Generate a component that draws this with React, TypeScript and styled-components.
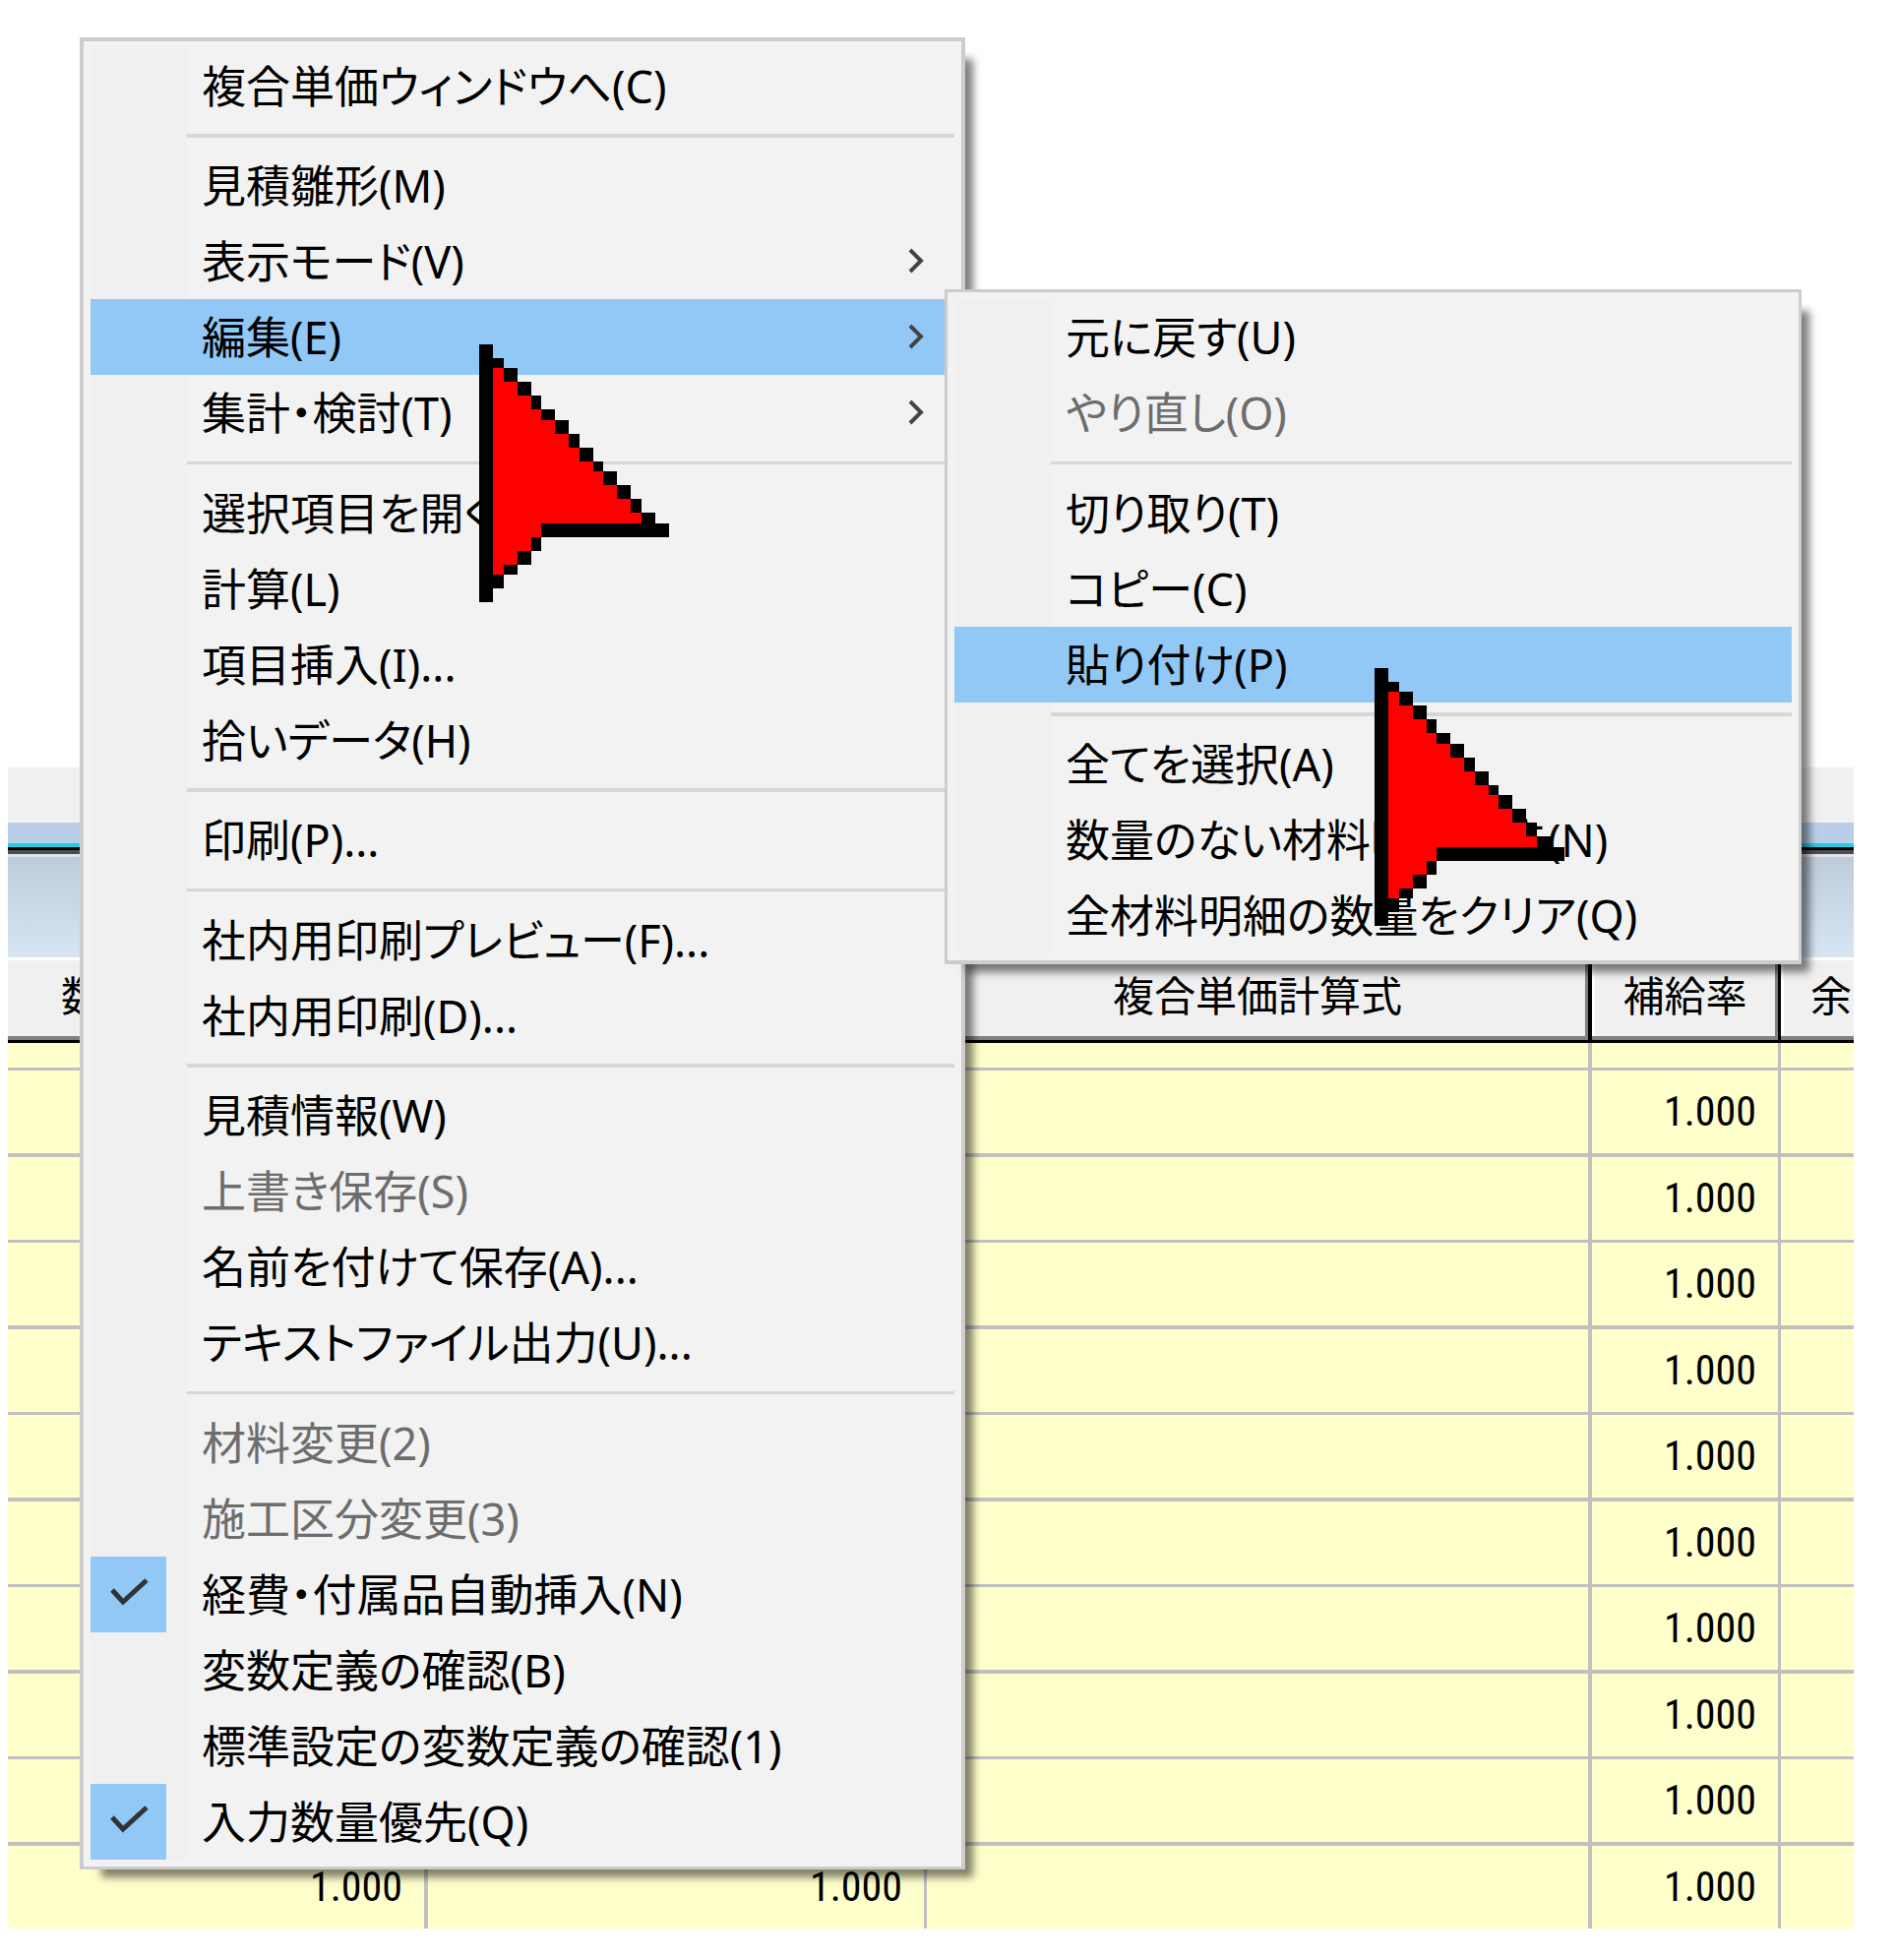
import React from "react";
import styled, { createGlobalStyle, css } from "styled-components";

const GlobalStyle = createGlobalStyle`
  *, *::before, *::after { box-sizing: border-box; }
  body { margin: 0; background: #fff; }
`;

const uiFont = `"Noto Sans", "Noto Sans CJK JP", sans-serif`;
const gridFont = `"Roboto Condensed", "Noto Sans CJK JP", sans-serif`;

const Page = styled.main`
  position: relative;
  padding: 780px 44px 32px 8px;
  overflow: hidden;
`;

/* ---------- sheet behind the menus ---------- */

const ToolStrip = styled.div`
  height: 56px;
  background: #f0f0f0;
`;

const TitleEdge = styled.div`
  height: 35px;
  background: #b9cfe9;
  border-bottom: 3px solid #dfe4f0;
  display: flex;
  flex-direction: column;
  justify-content: flex-end;
`;

const EdgeLine = styled.div<{ $color: string; $size: number }>`
  height: ${(p) => p.$size}px;
  background: ${(p) => p.$color};
`;

const Banner = styled.div`
  height: 105px;
  background: linear-gradient(#becbd8, #d8e5f3);
  border-bottom: 3px solid #fff;
`;

const Grid = styled.table`
  width: 100%;
  table-layout: fixed;
  border-collapse: separate;
  border-spacing: 0;
  background: #ffffcc;
  font-family: ${gridFont};
  color: #000;
`;

const Col = styled.col<{ $width?: number }>`
  ${(p) => p.$width && css`width: ${p.$width}px;`}
`;

const HeadCell = styled.th<{ $align?: string }>`
  height: 84px;
  padding: 0 0 5px;
  background: #f0f0f0;
  border-bottom: 3px solid #000;
  border-right: 4px solid #000;
  box-shadow: inset -3px -4px #808080, inset 3px 0 #fff;
  font-size: 42px;
  font-weight: 400;
  line-height: 1;
  text-align: ${(p) => p.$align ?? "center"};
  white-space: nowrap;
  overflow: hidden;

  &:nth-child(even) { border-right-width: 3px; }
  &:first-child { padding-left: 54px; box-shadow: inset -3px -4px #808080; }
  &:last-child {
    border-right: 0;
    padding-left: 30px;
    box-shadow: inset 0 -4px #808080, inset 3px 0 #fff;
  }
`;

const Row = styled.tr<{ $height: number }>`
  height: ${(p) => p.$height}px;
`;

const Cell = styled.td<{ $line: number }>`
  padding: 0 22px 0 0;
  border-right: 4px solid #c0c0c0;
  border-bottom: ${(p) => p.$line}px solid #c0c0c0;
  font-size: 42px;
  line-height: 1;
  text-align: right;

  &:nth-child(even) { border-right-width: 3px; }
  &:last-child { border-right: 0; }
`;

/* ---------- menus ---------- */

const MenuPanel = styled.div<{ $left: number; $top: number; $width: number; $border: string }>`
  position: absolute;
  left: ${(p) => p.$left}px;
  top: ${(p) => p.$top}px;
  width: ${(p) => p.$width}px;
  padding: 7px;
  display: flex;
  flex-direction: column;
  border: solid #ccc;
  border-width: ${(p) => p.$border};
  background-color: #f2f2f2;
  background-image: linear-gradient(#f0f0f0, #f0f0f0);
  background-origin: content-box;
  background-repeat: no-repeat;
  background-size: 98px 100%;
  box-shadow: 15px 15px 8px -7px rgba(0, 0, 0, 0.5);
`;

const itemLayout = css`
  display: grid;
  grid-template-columns: 98px 1fr auto;
  align-items: center;
  height: 77px;
  padding: 0 30px 0 0;
  font-family: ${uiFont};
  font-size: 45px;
  font-feature-settings: "palt";
  line-height: 76px;
  text-align: left;
  white-space: nowrap;
  color: #000;
`;

const ItemButton = styled.button<{ $active?: boolean }>`
  ${itemLayout}
  border: 0;
  background: ${(p) => (p.$active ? "#91c8f6" : "transparent")};

  &:disabled { color: #6d6d6d; }
`;

const ItemLabel = styled.label`
  ${itemLayout}
`;

const Caption = styled.span`
  grid-column: 2;
  padding-left: 15px;
`;

const Tick = styled.input`
  grid-area: 1 / 1;
  appearance: none;
  width: 77px;
  height: 77px;
  margin: 0;

  &:checked { background: #91c8f6; }
`;

const TickMark = styled.svg`
  grid-area: 1 / 1;
  width: 77px;
  height: 77px;
  pointer-events: none;
`;

const Chevron = styled.svg`
  width: 18px;
  height: 28px;
`;

const Divider = styled.hr<{ $thick: boolean }>`
  width: auto;
  align-self: stretch;
  height: ${(p) => (p.$thick ? 4 : 3)}px;
  margin: ${(p) => (p.$thick ? 10 : 11)}px 0 ${(p) => (p.$thick ? 10 : 11)}px 98px;
  border: 0;
  background: #d7d7d7;
`;

const Pointer = styled.svg<{ $left: number; $top: number }>`
  position: absolute;
  left: ${(p) => p.$left}px;
  top: ${(p) => p.$top}px;
  width: 193px;
  height: 262px;
  pointer-events: none;
`;

type Entry =
  | { kind: "item"; text: string; disabled?: boolean; active?: boolean; sub?: boolean }
  | { kind: "check"; text: string }
  | { kind: "line"; thick: boolean };

const item = (text: string, extra: object = {}): Entry => ({ kind: "item", text, ...extra });
const check = (text: string): Entry => ({ kind: "check", text });
const line = (thick: boolean): Entry => ({ kind: "line", thick });

const mainEntries: Entry[] = [
  item("複合単価ウィンドウへ(C)"),
  line(true),
  item("見積雛形(M)"),
  item("表示モード(V)", { sub: true }),
  item("編集(E)", { sub: true, active: true }),
  item("集計・検討(T)", { sub: true }),
  line(false),
  item("選択項目を開く"),
  item("計算(L)"),
  item("項目挿入(I)..."),
  item("拾いデータ(H)"),
  line(true),
  item("印刷(P)..."),
  line(false),
  item("社内用印刷プレビュー(F)..."),
  item("社内用印刷(D)..."),
  line(true),
  item("見積情報(W)"),
  item("上書き保存(S)", { disabled: true }),
  item("名前を付けて保存(A)..."),
  item("テキストファイル出力(U)..."),
  line(false),
  item("材料変更(2)", { disabled: true }),
  item("施工区分変更(3)", { disabled: true }),
  check("経費・付属品自動挿入(N)"),
  item("変数定義の確認(B)"),
  item("標準設定の変数定義の確認(1)"),
  check("入力数量優先(Q)"),
];

const editEntries: Entry[] = [
  item("元に戻す(U)"),
  item("やり直し(O)", { disabled: true }),
  line(false),
  item("切り取り(T)"),
  item("コピー(C)"),
  item("貼り付け(P)", { active: true }),
  line(true),
  item("全てを選択(A)"),
  item("数量のない材料明細消去(N)"),
  item("全材料明細の数量をクリア(Q)"),
];

function MenuEntry({ entry }: { entry: Entry }) {
  if (entry.kind === "line") return <Divider $thick={entry.thick} />;
  if (entry.kind === "check")
    return (
      <ItemLabel>
        <Tick type="checkbox" defaultChecked />
        <TickMark viewBox="0 0 77 77" aria-hidden="true">
          <path d="M22 34 L33 46 L57 24" fill="none" stroke="#333" strokeWidth="5" />
        </TickMark>
        <Caption>{entry.text}</Caption>
      </ItemLabel>
    );
  return (
    <ItemButton type="button" disabled={entry.disabled} $active={entry.active}>
      <Caption>{entry.text}</Caption>
      {entry.sub && (
        <Chevron viewBox="0 0 18 28" aria-hidden="true">
          <path d="M3 2 L14 13 L3 24" fill="none" stroke="#444" strokeWidth="4" />
        </Chevron>
      )}
    </ItemButton>
  );
}

function Arrow({ left, top }: { left: number; top: number }) {
  return (
    <Pointer $left={left} $top={top} viewBox="0 0 193 262" shapeRendering="crispEdges" aria-hidden="true">
      <path
        fill="#000"
        d="M0 0H14V14H25V24H39V38H53V52H63V66H77V77H91V91H102V105H116V119H126V129H140V143H154V157H165V171H179V182H193V196H63V210H53V224H39V234H25V248H14V262H0Z"
      />
      <path
        fill="#f00"
        d="M14 24H25V38H39V52H53V66H63V77H77V91H91V105H102V119H116V129H126V143H140V157H154V171H165V182H63V196H53V210H39V224H25V234H14Z"
      />
    </Pointer>
  );
}

const rows = Array.from({ length: 10 }, (_, i) => {
  const last = i === 9;
  return {
    quantity: last ? "1.000" : "",
    result: last ? "1.000" : "",
    formula: "",
    supply: "1.000",
    height: last ? 84 : i % 2 === 0 ? 88 : 87,
    line: last ? 0 : i % 2 === 0 ? 4 : 3,
  };
});

export default function App() {
  return (
    <Page>
      <GlobalStyle />
      <ToolStrip />
      <TitleEdge>
        <EdgeLine $color="#22cde5" $size={4} />
        <EdgeLine $color="#000" $size={3} />
        <EdgeLine $color="#4d4d4d" $size={4} />
      </TitleEdge>
      <Banner />
      <Grid>
        <colgroup>
          <Col $width={427} />
          <Col $width={507} />
          <Col />
          <Col $width={192} />
          <Col $width={74} />
        </colgroup>
        <thead>
          <tr>
            <HeadCell $align="left">数</HeadCell>
            <HeadCell />
            <HeadCell>複合単価計算式</HeadCell>
            <HeadCell>補給率</HeadCell>
            <HeadCell $align="left">余</HeadCell>
          </tr>
        </thead>
        <tbody>
          <Row $height={28}>
            <Cell $line={3} />
            <Cell $line={3} />
            <Cell $line={3} />
            <Cell $line={3} />
            <Cell $line={3} />
          </Row>
          {rows.map((r, i) => (
            <Row key={i} $height={r.height}>
              <Cell $line={r.line}>{r.quantity}</Cell>
              <Cell $line={r.line}>{r.result}</Cell>
              <Cell $line={r.line}>{r.formula}</Cell>
              <Cell $line={r.line}>{r.supply}</Cell>
              <Cell $line={r.line} />
            </Row>
          ))}
        </tbody>
      </Grid>

      <MenuPanel $left={81} $top={38} $width={900} $border="4px 4px 3px">
        {mainEntries.map((e, i) => (
          <MenuEntry key={i} entry={e} />
        ))}
      </MenuPanel>
      <MenuPanel $left={960} $top={294} $width={871} $border="3px 3px 4px">
        {editEntries.map((e, i) => (
          <MenuEntry key={i} entry={e} />
        ))}
      </MenuPanel>
      <Arrow left={487} top={350} />
      <Arrow left={1397} top={679} />
    </Page>
  );
}
